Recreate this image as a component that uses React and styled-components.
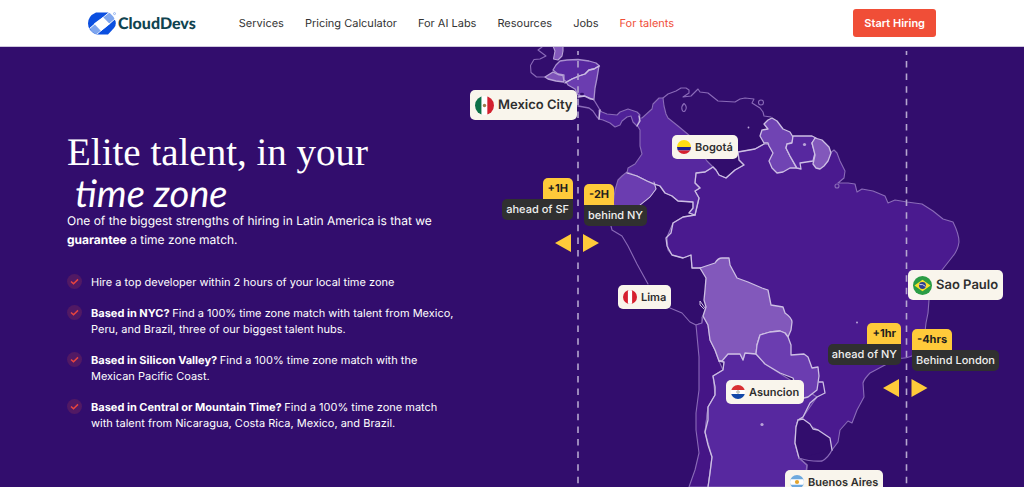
import React from 'react'
import styled, { createGlobalStyle, css } from 'styled-components'

const GlobalStyle = createGlobalStyle`
    *, *::before, *::after {
        box-sizing: border-box;
    }

    body {
        margin: 0;
        background-color: #ffffff;
        font-family: Inter, 'Liberation Sans', sans-serif;
        text-rendering: geometricPrecision;
    }
`;

const Header = styled.header`
    display: flex;
    align-items: center;
    height: 47px;
    padding: 0 88px;
    border-bottom: 1px solid #cfc8de;
`;

const LogoLink = styled.a`
    display: flex;
    align-items: center;
    gap: 2px;
    color: #10434f;
    font-family: Lato, sans-serif;
    font-size: 16px;
    font-weight: 900;
    text-decoration: none;
`;

const Nav = styled.nav`
    display: flex;
    flex: 1;
    gap: 21px;
    margin-left: 43px;
`;

const NavLink = styled.a`
    color: ${({ $active }) => ($active ? '#f04e37' : '#333333')};
    font-size: 11px;
    line-height: 16px;
    text-decoration: none;
    white-space: nowrap;
`;

const HireButton = styled.button`
    height: 28px;
    padding: 0 11px;
    border: none;
    border-radius: 3px;
    background-color: #f04e37;
    color: #ffffff;
    font-family: inherit;
    font-size: 11px;
    font-weight: 600;
    white-space: nowrap;
    cursor: pointer;
`;

const Hero = styled.main`
    display: grid;
    grid-template-columns: 470fr 554fr;
    background-color: #320d6d;
    overflow: hidden;
`;

const Copy = styled.section`
    padding: 84px 12px 0 67px;
    color: #ffffff;
`;

const Title = styled.h1`
    margin: 0;
    font-family: 'Liberation Serif', serif;
    font-size: 39px;
    font-weight: 400;
    line-height: 44px;
    white-space: nowrap;
`;

const Handwritten = styled.span`
    display: block;
    padding-left: 8px;
    font-family: Lato, sans-serif;
    font-size: 38px;
    font-style: italic;
    line-height: 36px;
`;

const Lead = styled.p`
    margin: 0;
    font-size: 12px;
    line-height: 19px;
    max-width: 391px;
`;

const Benefits = styled.ul`
    display: grid;
    gap: 15px;
    max-width: 391px;
    margin: 25px 0 0;
    padding: 0;
    list-style: none;
`;

const Benefit = styled.li`
    display: flex;
    align-items: flex-start;
    gap: 9px;
    font-size: 11px;
    line-height: 16px;
`;

const Tick = styled.svg`
    flex: none;
    width: 15px;
    height: 15px;
`;

const MapArea = styled.section`
    position: relative;
    aspect-ratio: 554 / 440;
`;

const MapSvg = styled.svg`
    display: block;
    width: 100%;
    height: 100%;
`;

// Places an item on the map, measured in units of the 554x440 map
const onMap = css`
    position: absolute;
    top: ${({ $y }) => ($y / 440) * 100}%;
    ${({ $x, $end }) =>
        $end ? `right: ${((554 - $x) / 554) * 100}%;` : `left: ${($x / 554) * 100}%;`}
`;

const CityPin = styled.div`
    ${onMap}
    display: flex;
    align-items: center;
    gap: 4px;
    height: ${({ $big }) => ($big ? 30 : 24)}px;
    padding: 0 5px;
    border-radius: 5px;
    background-color: #f9f5ec;
    color: #2e2e2e;
    font-size: ${({ $big }) => ($big ? 13 : 11)}px;
    font-weight: 600;
    white-space: nowrap;

    svg {
        width: ${({ $big }) => ($big ? 19 : 14)}px;
        height: ${({ $big }) => ($big ? 19 : 14)}px;
        border-radius: 50%;
    }
`;

const Offset = styled.div`
    ${onMap}
    display: flex;
    flex-direction: column;
    align-items: ${({ $end }) => ($end ? 'flex-end' : 'flex-start')};
    white-space: nowrap;
`;

const OffsetHours = styled.strong`
    padding: 0 5px;
    border-radius: 5px 5px 0 0;
    background-color: #ffca3a;
    color: #1f1f1f;
    font-size: 11px;
    font-weight: 700;
    line-height: 21px;
`;

const OffsetPlace = styled.span`
    padding: 0 4px;
    border-radius: ${({ $end }) => ($end ? '5px 0 5px 5px' : '0 5px 5px 5px')};
    background-color: #303030;
    color: #f0f0f0;
    font-size: 11px;
    font-weight: 500;
    line-height: 21px;
`;

const flags = {
    mexico: (
        <>
            <path d="M0 0h7v20H0z" fill="#0c7048" />
            <path d="M7 0h6v20H7z" fill="#ffffff" />
            <path d="M13 0h7v20h-7z" fill="#d3202f" />
            <circle cx="10" cy="10" r="1.8" fill="#9c7a4a" />
        </>
    ),
    colombia: (
        <>
            <path d="M0 0h20v10H0z" fill="#ffdd15" />
            <path d="M0 10h20v5H0z" fill="#20208f" />
            <path d="M0 15h20v5H0z" fill="#d6202f" />
        </>
    ),
    peru: (
        <>
            <path d="M0 0h20v20H0z" fill="#d6202f" />
            <path d="M7 0h6v20H7z" fill="#ffffff" />
        </>
    ),
    brazil: (
        <>
            <path d="M0 0h20v20H0z" fill="#2a9c45" />
            <path d="M10 4l8.5 6-8.5 6-8.5-6z" fill="#f8e02c" />
            <circle cx="10" cy="10" r="3.6" fill="#2b3f92" />
            <path d="M6.8 9q3.5-.8 6.4 2" stroke="#ffffff" strokeWidth=".8" fill="none" />
        </>
    ),
    paraguay: (
        <>
            <path d="M0 0h20v7H0z" fill="#d82f32" />
            <path d="M0 7h20v6H0z" fill="#ffffff" />
            <path d="M0 13h20v7H0z" fill="#1247a8" />
            <circle cx="10" cy="10" r="1.8" fill="none" stroke="#77806f" strokeWidth=".9" />
        </>
    ),
    argentina: (
        <>
            <path d="M0 0h20v20H0z" fill="#6ea9de" />
            <path d="M0 6h20v8H0z" fill="#ffffff" />
            <circle cx="10" cy="10" r="3" fill="#e3a52f" />
        </>
    ),
};

const cities = [
    { name: 'Mexico City', flag: 'mexico', x: 0, y: 43, big: true },
    { name: 'Bogotá', flag: 'colombia', x: 202, y: 88 },
    { name: 'Lima', flag: 'peru', x: 148, y: 238 },
    { name: 'Sao Paulo', flag: 'brazil', x: 438, y: 223, big: true },
    { name: 'Asuncion', flag: 'paraguay', x: 256, y: 333 },
    { name: 'Buenos Aires', flag: 'argentina', x: 315, y: 423 },
];

const offsets = [
    { hours: '+1H', place: 'ahead of SF', x: 103, y: 131, end: true },
    { hours: '-2H', place: 'behind NY', x: 114, y: 137 },
    { hours: '+1hr', place: 'ahead of NY', x: 431, y: 276, end: true },
    { hours: '-4hrs', place: 'Behind London', x: 442, y: 282 },
];

const benefits = [
    { text: 'Hire a top developer within 2 hours of your local time zone' },
    {
        lead: 'Based in NYC?',
        text: 'Find a 100% time zone match with talent from Mexico, Peru, and Brazil, three of our biggest talent hubs.',
    },
    {
        lead: 'Based in Silicon Valley?',
        text: 'Find a 100% time zone match with the Mexican Pacific Coast.',
    },
    {
        lead: 'Based in Central or Mountain Time?',
        text: 'Find a 100% time zone match with talent from Nicaragua, Costa Rica, Mexico, and Brazil.',
    },
];

const links = ['Services', 'Pricing Calculator', 'For AI Labs', 'Resources', 'Jobs', 'For talents'];

const LogoMark = () => (
    <svg width="28" height="23" viewBox="0 0 28 23" aria-hidden="true">
        <path d="M8 .5H20L23 3l4.500 6q1 4-1.500 7l-6 6.500H8.500Q0 19 0 11.500 0 4 8 .5z" fill="#0b4fe0" />
        <path d="M15 5.500L20.500.5Q25 3 26.500 7L22 12z" fill="#7fa6ee" />
        <path d="M6.500 11.500L13.500 18 8.500 22.500Q3.500 20.500 1.500 16z" fill="#7fa6ee" />
        <path d="M15 5l7 7-9 7-7-7.500z" fill="#ffffff" />
        <path d="M21 .5L1.500 16.500M27 7L8.500 22.500" stroke="#ffffff" strokeWidth=".9" />
        <circle cx="26.500" cy="1.600" r="1" fill="none" stroke="#7fa6ee" strokeWidth=".8" />
    </svg>
);

const LatinAmerica = () => (
    <MapSvg viewBox="470 47 554 440" preserveAspectRatio="none" aria-hidden="true">
        <g strokeLinejoin="round" strokeLinecap="round" strokeWidth="1.1" stroke="#8a6bb8" fill="none">
            {/* open coast lines */}
            <path d="M542 47l-4 3 8 6-6 3-6 .5-3.500 6 .5 7 5.500 4.500h8.500" />
            <path d="M663 98L668 94 676 91 681 88 686 88 689 90 689 93 683 97 691 96 696 91 698 89 700 92 708 93 713 97 718 101 735 102 740 99 745 98 754 99 752 103 760 108 763 112 764 116 771 117" />
            <path d="M611 226L612 230 622 236 628 246 637 264 648 284M670 308L682 313 690 322 696 325 702 323 702 317" />
            <circle cx="761" cy="102.500" r="2.500" />
            <path d="M684 103.500q-3 3-2 6 1 3 3 1.500 3-4-1-7.500z" />
            <path d="M553 46l2 5-1.500 8 4.500 1 4-4 1-5v-5z" fill="#8258bb" stroke="#b9a4d8" />

            {/* Brazil */}
            <path
                fill="#4a1a8f"
                d="M713 167L716 170 719 175 726 178 735 170 744 165 739 160 738 152 755 149 764 144 829 154 834 150 837 153 840 161 845 171 844 178 838 183 848 183 855 184 857 192 862 189 873 191 885 196 888 203 895 200 907 202 922 204 933 211 943 219 953 222Q959 234 959 242 958 250 953 256L942 270 929 300 928 313 926 323 924 340 912 356Q904 359 900 358L885 365 870 373Q864 379 863 383L864 397 857 410 852 423 848 421 840 430 838 442 832 450 818 430 798 420 803 417 800 380 757 345 730 290 703 268 692 268 691 255 683 258 672 255 668 250 667 237 673 223 683 217 695 215 699 198 695 191 700 188 695 183 696 173 705 172z"
            />
            <circle cx="837" cy="186" r="2" />
            {/* Chile */}
            <path fill="#451586" d="M696 325L702 323 703 316 708 325 710 340 715 350 719 361 723 370 713 376 715 395 708 407 705 432 712 457 708 487 689 487 695 470 699 453 696 430 696 413 699 390 699 357z" />
            {/* Argentina */}
            <path
                fill="#57289f"
                d="M719 361L728 354 740 354 743 360 745 353 756 354 765 364 817 397 803 417 798 420 796 427 795 443 799 458 807 465 806 487 708 487 710 473 712 457 705 432 708 407 715 395 715 387 713 376 723 370 724 362z"
            />
            {/* Colombia */}
            <path
                fill="#57289f"
                d="M637 125L640 130 640 146 642 154 635 164 628 168 627 173 637 176 647 181 660 186 665 193 672 196 678 201 693 202 693 208 689 213 695 215 699 198 695 191 700 188 695 183 696 173 705 172 713 167 707 161 690 136 678 126 668 118 666 114 664 106 663 98 659 98 653 104 652 109 642 118 639 118z"
            />
            <path fill="#4f2198" d="M599 110L602 112 607 114 617 115 620 112 628 109 637 112 640 115 639 121 637 126 633 122 631 116 627 117 622 121 620 125 615 127 610 123 603 120 599 119z" />
            {/* Ecuador */}
            <path fill="#6b3db0" d="M627 172L637 176 647 181 655 185 656 189 650 197 640 205 632 208 613 205 615 190 618 180 622 176z" />
        </g>

        <g strokeLinejoin="round" strokeLinecap="round" strokeWidth="1.3" stroke="#cdbfe4" fill="none">
            {/* Central America */}
            <path fill="#57289f" stroke="#a990cf" d="M553 70L556 65 560 61 567 60 578 59.500 589 61 596 63 599.500 66 594 69 589 70 585 74 579 76 572 79 567 82 564 80 564 75 558 74z" />
            <path fill="#7d52b8" stroke="#b9a4d8" d="M545 77L553 72 558 74.500 563 75.500 564 82 556 81 548 79z" />
            <path fill="#6b3db0" stroke="#a990cf" d="M566 82L572 79 579 76 585 74 589 70 594 69 599 66 597 78 595 88 594 99 590 99 584 96 578 95 575 89 568 85z" />
            <path d="M565 83L572 79 579 76 585 74 589 70 594 69 599 66M578 97L585 96 594 100" />
            <ellipse cx="582" cy="94" rx="2" ry="1.200" fill="#320d6d" stroke="none" />
            <path stroke="#8a6bb8" d="M594 100L597 105 600 110M578 106L589 108 593 111 597 117 599 119" />
            <path d="M600 110L599 119M639 116L640 121 637 126" />

            {/* inland borders */}
            <path d="M627 173L637 176 647 181 654 184 660 186 665 193 672 196 678 201 693 202 693 208 689 213 695 215 699 198 695 191 700 188 695 183 696 173 705 172 713 167 716 170 719 175 726 178 735 170 744 165 739 160 738 152 755 149 764 144" />
            <path d="M654 182L656 189 650 197 640 205" strokeWidth="1" />
            <path d="M695 215L683 217 673 223 671 233 666 238 667 246 672 255 683 258 691 255 692 268 703 268" />
            <path fill="#7044b3" d="M772 118L777 121 783 129 790 132 793 137 792 143 787 144 786 148 790 156 796 167 800 168 790 168 783 172 777 173 772 168 769 161 773 153 769 146 768 143 764 143 760 136 762 130 768 129 764 124 768 120z" />
            <path fill="#57289f" d="M793 136L812 136 816 138 812 143 815 153 813 161 800 163 801 169 797 168 790 156 786 148 787 144 792 143z" />
            <path fill="#8258bb" d="M815 138L822 140 829 147 831 153 828 161 824 166 820 169 816 168 813 164 815 155 812 143z" />
            <path fill="#8258bb" d="M700 268L715 263Q718 258 722 258L729 258 730 265 737 278 748 282 762 288 768 290 771 305 783 307 785 313Q792 318 792 322L791 330 788 337 785 333 780 331 770 332 760 335 757 345 756 354 745 353 743 360 740 354 728 354 722 361 719 361 715 350 710 340 708 325 703 316 706 307 704 300 705 290 706 278z" />
            <path fill="#6b3db0" d="M788 337L791 345 791 355 804 354 808 357 812 368 818 367 819 376 817 390 808 397 800 399 793 378 780 373 765 364 756 354 757 345 760 335 770 332 780 331 785 333z" />
            <path d="M819 382L823 382 825 393 817 397 810 403 803 417 798 420" />
            <path d="M719 361L724 362 723 370 713 376 715 387 715 395 708 407 708 420 705 432 708 445 712 457 710 473 708 487" />
            <path fill="#320d6d" stroke="#8a6bb8" d="M796 427L798 420 832 450 Q828 458 822 461 812 462 799 458L795 443z" />
            <path fill="#320d6d" d="M799 458L795 443 796 427 798 420 803 419 810 424 813 429 818 430 824 434 830 438 831 444 832 450" />
            <path stroke="#8a6bb8" d="M799 458L807 465 806 472" />
            <path d="M705 308L700 301 700 305 704 309" strokeWidth="1" />
        </g>

        <g fill="#b9a4d8">
            <circle cx="748.500" cy="127.500" r=".9" />
            <circle cx="804.500" cy="144.500" r="1.600" />
            <circle cx="857" cy="322.500" r="1" />
            <circle cx="762" cy="424.500" r="1.600" />
        </g>

        {/* time zone meridians */}
        <path
            d="M578 51v436M906.500 51v436"
            stroke="#b5a6cf"
            strokeWidth="1.6"
            strokeDasharray="6.5 6.1"
            strokeDashoffset="2.6"
        />
        <path d="M571 234v18l-16-9zM583 234v18l16-9zM899 379v18l-16-9zM911.500 379v18l16-9z" fill="#ffca3a" />
    </MapSvg>
);

const App = () => {
  return (
    <>
        <GlobalStyle />
        <Header>
            <LogoLink href="#home">
                <LogoMark />
                CloudDevs
            </LogoLink>
            <Nav>
                {links.map((link) => (
                    <NavLink key={link} href="#" $active={link === 'For talents'}>{link}</NavLink>
                ))}
            </Nav>
            <HireButton type="button">Start Hiring</HireButton>
        </Header>
        <Hero>
            <Copy>
                <Title>
                    Elite talent, in your
                    <Handwritten>time zone</Handwritten>
                </Title>
                <Lead>
                    One of the biggest strengths of hiring in Latin America is that we{' '}
                    <strong>guarantee</strong> a time zone match.
                </Lead>
                <Benefits>
                    {benefits.map(({ lead, text }) => (
                        <Benefit key={text}>
                            <Tick viewBox="0 0 15 15" aria-hidden="true">
                                <circle cx="7.5" cy="7.5" r="7.5" fill="#511964" />
                                <path d="M4 7.5l2.500 2.300L11 5.400" fill="none" stroke="#e8453f" strokeWidth="1.5" />
                            </Tick>
                            <span>
                                {lead && <strong>{lead} </strong>}
                                {text}
                            </span>
                        </Benefit>
                    ))}
                </Benefits>
            </Copy>
            <MapArea>
                <LatinAmerica />
                {cities.map(({ name, flag, x, y, big }) => (
                    <CityPin key={name} $x={x} $y={y} $big={big}>
                        <svg viewBox="0 0 20 20" aria-hidden="true">{flags[flag]}</svg>
                        {name}
                    </CityPin>
                ))}
                {offsets.map(({ hours, place, x, y, end }) => (
                    <Offset key={place} $x={x} $y={y} $end={end}>
                        <OffsetHours>{hours}</OffsetHours>
                        <OffsetPlace $end={end}>{place}</OffsetPlace>
                    </Offset>
                ))}
            </MapArea>
        </Hero>
    </>
  )
}

export default App
